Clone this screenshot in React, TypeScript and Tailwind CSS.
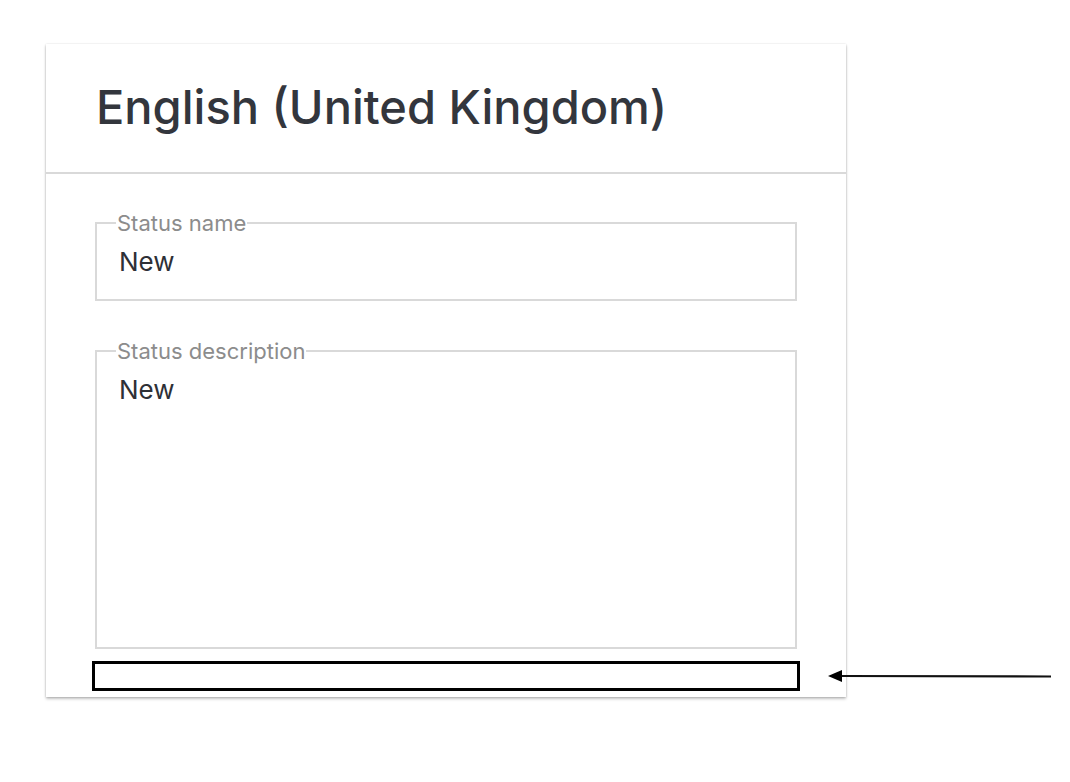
import React from "react";

export default function App() {
  return (
    <div className="relative w-[1070px] h-[782px] bg-white" style={{ fontFamily: "Inter, 'Liberation Sans', sans-serif" }}>
      <div className="absolute left-[46px] top-[44px] w-[800px] h-[653px] bg-white shadow-[0_2px_3px_rgba(0,0,0,0.2),0_1px_2px_rgba(0,0,0,0.12),0_0_2px_rgba(0,0,0,0.1)] flex flex-col">
        <div className="h-[130px] border-b-2 border-[#d9d9d9] flex items-center pl-[50px]">
          <h1 className="text-[47px] font-medium leading-none text-[#33363d] -mt-[4px]">English (United Kingdom)</h1>
        </div>
        <div className="px-[49px] pt-[37px] flex flex-col">
          <fieldset className="border-2 border-[#d9d9d9] h-[90px] px-[22px]">
            <legend className="ml-[-3px] px-[1px] text-[22px] leading-[24px] text-[#8c8c8c]">Status name</legend>
            <div className="text-[26px] leading-[30px] text-[#2e3036] mt-[12px]">New</div>
          </fieldset>
          <fieldset className="border-2 border-[#d9d9d9] h-[310px] px-[22px] mt-[38px]">
            <legend className="ml-[-3px] px-[1px] text-[22px] leading-[24px] text-[#8c8c8c]">Status description</legend>
            <div className="text-[26px] leading-[30px] text-[#2e3036] mt-[12px]">New</div>
          </fieldset>
          <div className="mt-[12px] -mx-[3px] h-[30px] border-[3px] border-black"></div>
        </div>
      </div>
      <svg className="absolute left-[826px] top-[666px]" width="230" height="20" viewBox="0 0 230 20">
        <line x1="14" y1="10" x2="225" y2="10.5" stroke="#111" strokeWidth="2.2" />
        <polygon points="2,10 16,4 16,16" fill="#000" />
      </svg>
    </div>
  );
}
